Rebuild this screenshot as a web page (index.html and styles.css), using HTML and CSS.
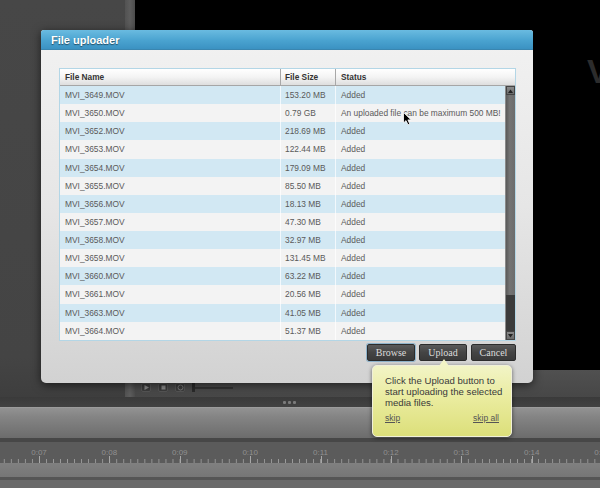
FILE: index.html
```html
<!DOCTYPE html>
<html>
<head>
<meta charset="utf-8">
<link rel="stylesheet" href="styles.css">
</head>
<body>
<div class="app">
  <div class="top">
    <div class="left-panel"></div>
    <div class="sep"></div>
    <div class="video-col">
      <div class="video"><span class="vtext">V</span></div>
      <div class="player">
        <span class="pbtn"><svg width="7" height="7" viewBox="0 0 7 7"><path d="M1.5 1 L6 3.5 L1.5 6 Z" fill="#8a8a8a"/></svg></span>
        <span class="pbtn"><svg width="7" height="7" viewBox="0 0 7 7"><rect x="1.5" y="1.5" width="4" height="4" fill="#8a8a8a"/></svg></span>
        <span class="pbtn"><svg width="7" height="7" viewBox="0 0 7 7"><circle cx="3.5" cy="3.5" r="2.5" fill="none" stroke="#7a7a7a" stroke-width="1"/></svg></span>
        <div class="slider"><span class="knob"></span></div>
      </div>
    </div>
  </div>
  <div class="dots-bar"><span class="dot"></span><span class="dot"></span><span class="dot"></span></div>
  <div class="track-band"></div>
  <div class="dark-line"></div>
  <div class="ruler">
    <div class="sec">0:07</div>
    <div class="sec">0:08</div>
    <div class="sec">0:09</div>
    <div class="sec">0:10</div>
    <div class="sec">0:11</div>
    <div class="sec">0:12</div>
    <div class="sec">0:13</div>
    <div class="sec">0:14</div>
    <div class="sec">0:15</div>
  </div>
  <div class="band2"></div>
  <div class="line2"></div>
  <div class="band3"></div>

  <div class="dialog">
    <div class="dlg-title">File uploader</div>
    <div class="dlg-body">
      <div class="grid">
        <div class="thead">
          <div class="c1">File Name</div>
          <div class="c2">File Size</div>
          <div class="c3">Status</div>
        </div>
        <div class="tbody">
          <div class="rows">
            <div class="row"><div class="c1">MVI_3649.MOV</div><div class="c2">153.20 MB</div><div class="c3">Added</div></div>
            <div class="row"><div class="c1">MVI_3650.MOV</div><div class="c2">0.79 GB</div><div class="c3">An uploaded file can be maximum 500 MB!</div></div>
            <div class="row"><div class="c1">MVI_3652.MOV</div><div class="c2">218.69 MB</div><div class="c3">Added</div></div>
            <div class="row"><div class="c1">MVI_3653.MOV</div><div class="c2">122.44 MB</div><div class="c3">Added</div></div>
            <div class="row"><div class="c1">MVI_3654.MOV</div><div class="c2">179.09 MB</div><div class="c3">Added</div></div>
            <div class="row"><div class="c1">MVI_3655.MOV</div><div class="c2">85.50 MB</div><div class="c3">Added</div></div>
            <div class="row"><div class="c1">MVI_3656.MOV</div><div class="c2">18.13 MB</div><div class="c3">Added</div></div>
            <div class="row"><div class="c1">MVI_3657.MOV</div><div class="c2">47.30 MB</div><div class="c3">Added</div></div>
            <div class="row"><div class="c1">MVI_3658.MOV</div><div class="c2">32.97 MB</div><div class="c3">Added</div></div>
            <div class="row"><div class="c1">MVI_3659.MOV</div><div class="c2">131.45 MB</div><div class="c3">Added</div></div>
            <div class="row"><div class="c1">MVI_3660.MOV</div><div class="c2">63.22 MB</div><div class="c3">Added</div></div>
            <div class="row"><div class="c1">MVI_3661.MOV</div><div class="c2">20.56 MB</div><div class="c3">Added</div></div>
            <div class="row"><div class="c1">MVI_3663.MOV</div><div class="c2">41.05 MB</div><div class="c3">Added</div></div>
            <div class="row"><div class="c1">MVI_3664.MOV</div><div class="c2">51.37 MB</div><div class="c3">Added</div></div>
          </div>
          <div class="scrollbar">
            <div class="sb-arrow"><svg width="5" height="4" viewBox="0 0 5 4"><path d="M0 4 L2.5 0.5 L5 4 Z" fill="#222"/></svg></div>
            <div class="sb-thumb"></div>
            <div class="sb-track"></div>
            <div class="sb-arrow"><svg width="5" height="4" viewBox="0 0 5 4"><path d="M0 0 L2.5 3.5 L5 0 Z" fill="#222"/></svg></div>
          </div>
        </div>
      </div>
      <div class="actions">
        <button class="btn btn-browse">Browse</button>
        <button class="btn btn-upload">Upload</button>
        <button class="btn btn-cancel">Cancel</button>
      </div>
    </div>
  </div>

  <div class="tooltip">
    <p class="tip-text">Click the Upload button to<br>start uploading the selected<br>media files.</p>
    <div class="tip-links"><a class="tip-link">skip</a><a class="tip-link">skip all</a></div>
  </div>

  <svg class="cursor" width="10" height="14" viewBox="0 0 10 14"><path d="M0.5 0.5 L0.5 11 L3 8.6 L5 12.8 L6.8 12 L4.9 7.9 L8.2 7.9 Z" fill="#000" stroke="#fff" stroke-width="0.8"/></svg>
</div>
</body>
</html>
```

FILE: styles.css
```css
* { box-sizing: border-box; margin: 0; padding: 0; }
body {
  margin: 0;
  width: 600px;
  height: 488px;
  overflow: hidden;
  background: #444;
  font-family: "Liberation Sans", Arial, sans-serif;
}
.app {
  position: relative;
  width: 600px;
  height: 488px;
  display: flex;
  flex-direction: column;
  overflow: hidden;
}
.top { display: flex; height: 397px; }
.left-panel { width: 125px; background: linear-gradient(#474747, #444 90%, #3e3e3e); }
.sep { width: 10px; background: linear-gradient(90deg, #525252, #5d5d5d 50%, #4c4c4c); }
.video-col { flex: 1; display: flex; flex-direction: column; }
.video { height: 370px; background: #000; position: relative; overflow: hidden; }
.vtext {
  position: absolute;
  left: 452px;
  top: 52px;
  font-size: 34px;
  font-weight: bold;
  color: #2c2c2c;
}
.player {
  height: 27px;
  background: linear-gradient(#505050, #474747);
  display: flex;
  align-items: flex-end;
  padding: 0 0 5px 6px;
  gap: 7px;
}
.pbtn {
  width: 10px;
  height: 9px;
  background: #3c3c3c;
  border: 1px solid #565656;
  border-radius: 2px;
  display: flex;
  align-items: center;
  justify-content: center;
}
.slider {
  width: 41px;
  height: 9px;
  display: flex;
  align-items: center;
  background: linear-gradient(#333, #333) 0 50% / 100% 2px no-repeat;
}
.knob { width: 3px; height: 9px; background: #2a2a2a; }
.dots-bar {
  height: 10px;
  background: linear-gradient(#3a3a3a, #424242);
  display: flex;
  align-items: center;
  gap: 2px;
  padding-left: 283px;
}
.dot { width: 3px; height: 3px; background: #7a7a7a; border-radius: 1px; }
.track-band {
  height: 31px;
  background: linear-gradient(#929292, #848484 30%, #6c6c6c);
  border-top: 1px solid #9c9c9c;
}
.dark-line { height: 4px; background: #474747; }
.ruler {
  height: 21px;
  display: flex;
  padding-left: 3.8px;
  background:
    linear-gradient(90deg, #9c9c9c 1px, transparent 1px) 3.8px 100% / 7.04px 4px repeat-x,
    #5b5b5b;
}
.sec {
  flex: 0 0 70.4px;
  position: relative;
  text-align: center;
  font-size: 8px;
  color: #909090;
  padding-top: 6px;
}
.sec::after {
  content: "";
  position: absolute;
  left: 35.2px;
  bottom: 0;
  width: 1px;
  height: 7px;
  background: #a8a8a8;
}
.band2 { height: 14px; background: linear-gradient(#808080, #767676); }
.line2 { height: 3px; background: #555; }
.band3 { height: 8px; background: #6a6a6a; }

/* Dialog */
.dialog {
  position: absolute;
  left: 41px;
  top: 30px;
  width: 492px;
  height: 353px;
  border-radius: 3px 3px 5px 5px;
  background: linear-gradient(#f2f2f2, #e6e6e6 50%, #d2d2d2);
  box-shadow: 0 2px 10px rgba(0, 0, 0, 0.6);
  display: flex;
  flex-direction: column;
  overflow: hidden;
}
.dlg-title {
  height: 20px;
  background: linear-gradient(#6abbe0, #4aa3d0 55%, #3b92c2);
  border-bottom: 1px solid #3a86b0;
  color: #fff;
  font-weight: bold;
  font-size: 11px;
  line-height: 20px;
  padding-left: 10px;
  text-shadow: 0 1px 1px rgba(0, 0, 0, 0.5);
}
.dlg-body {
  flex: 1;
  padding: 18px 17px 0 18px;
  display: flex;
  flex-direction: column;
}
.grid {
  height: 273px;
  border: 1px solid #b3d6e6;
  background: #fff;
  display: flex;
  flex-direction: column;
}
.thead {
  display: flex;
  height: 17px;
  background: linear-gradient(#ffffff, #f4f4f4 50%, #dedede);
  border-bottom: 1px solid #a6a6a6;
  font-weight: bold;
  font-size: 8.3px;
  color: #333;
  line-height: 16px;
}
.c1 { width: 221px; padding-left: 5px; border-right: 1px solid #a8a8a8; white-space: nowrap; }
.c2 { width: 55px; padding-left: 4px; border-right: 1px solid #a8a8a8; white-space: nowrap; }
.c3 { flex: 1; padding-left: 5px; white-space: nowrap; overflow: hidden; }
.tbody { flex: 1; display: flex; }
.rows { flex: 1; display: flex; flex-direction: column; }
.row {
  height: 18.14px;
  display: flex;
  align-items: center;
  font-size: 8.4px;
  color: #5a5a5a;
  background: #f3f3f3;
}
.row:nth-child(odd) { background: #d2e8f3; }
.row .c1, .row .c2 { border-right: 1px solid rgba(255, 255, 255, 0.7); height: 100%; display: flex; align-items: center; }
.scrollbar {
  width: 10px;
  display: flex;
  flex-direction: column;
  background: #3e3e3e;
  border-left: 1px solid #8a8a8a;
}
.sb-arrow {
  height: 9px;
  background: linear-gradient(#8a8a8a, #6a6a6a);
  border: 1px solid #444;
  display: flex;
  align-items: center;
  justify-content: center;
}
.sb-thumb { height: 200px; background: linear-gradient(90deg, #5a5a5a, #747474 40%, #6c6c6c); }
.sb-track { flex: 1; background: #3b3b3b; }
.actions {
  display: flex;
  justify-content: flex-end;
  gap: 4px;
  margin-top: 3px;
}
.btn {
  height: 17px;
  font-family: "Liberation Serif", "Times New Roman", serif;
  font-size: 10px;
  color: #dcdcdc;
  background: linear-gradient(#5a5a5a, #444 50%, #3a3a3a);
  border: 1px solid #2c2c2c;
  border-radius: 2px;
  line-height: 15px;
  text-align: center;
}
.btn-browse { width: 48px; box-shadow: 0 0 0 1px #8fb4cc; }
.btn-upload { width: 48px; }
.btn-cancel { width: 45px; }

/* Tooltip */
.tooltip {
  position: absolute;
  left: 372px;
  top: 365px;
  width: 140px;
  height: 72px;
  border-radius: 5px;
  background: linear-gradient(#f2f4c6, #e9eb9c 50%, #dcdf7a);
  border: 1px solid #f0f0d8;
  box-shadow: 0 1px 4px rgba(0, 0, 0, 0.55);
  padding: 9px 3px 0 12px;
  display: flex;
  flex-direction: column;
}
.tooltip::before {
  content: "";
  position: absolute;
  left: 66px;
  top: -7px;
  border-left: 5px solid transparent;
  border-right: 5px solid transparent;
  border-bottom: 7px solid #f2f4c6;
}
.tip-text {
  font-size: 9.6px;
  line-height: 11px;
  color: #3a3a3a;
  white-space: nowrap;
}
.tip-links {
  display: flex;
  justify-content: space-between;
  margin-top: 5px;
  padding-right: 9px;
}
.tip-link {
  font-size: 8.5px;
  color: #555;
  text-decoration: underline;
}
.cursor { position: absolute; left: 403px; top: 112px; }
```
